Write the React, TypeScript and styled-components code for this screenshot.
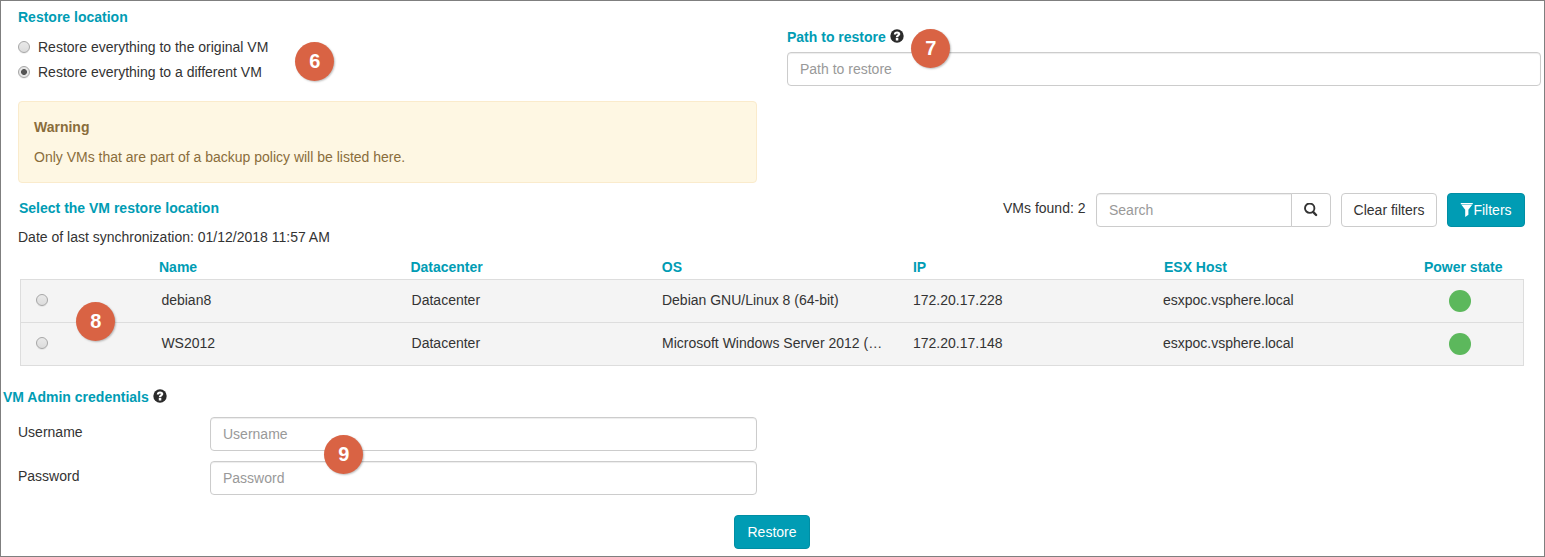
import React from 'react';
import styled, { createGlobalStyle } from 'styled-components';

const teal = '#009cb4';

const GlobalStyle = createGlobalStyle`
  *, *::before, *::after { box-sizing: border-box; }
  body {
    margin: 0;
    background: #fff;
    color: #333;
    font: 14px/20px "Liberation Sans", Arial, sans-serif;
  }
`;

const Page = styled.main`
  position: relative;
  display: flex;
  flex-direction: column;
  width: 1545px;
  height: 557px;
  border: 1px solid #7f7f7f;
  overflow: hidden;
`;

const TopRow = styled.div`
  display: flex;
  gap: 30px;
  padding: 6px 3px 0 17px;
`;

const LocationColumn = styled.section`
  width: 739px;
`;

const PathColumn = styled.section`
  flex: 1;
  padding-top: 20px;
`;

const Title = styled.h2`
  display: flex;
  gap: 4.6px;
  margin: 0;
  color: ${teal};
  font-size: 14px;
  line-height: 20px;
  font-weight: bold;
  white-space: nowrap;
`;

const Options = styled.div`
  display: flex;
  flex-direction: column;
  gap: 5px;
  margin-top: 10px;
`;

const Option = styled.label`
  display: flex;
  align-items: center;
  gap: 8px;
`;

const Radio = styled.input.attrs({ type: 'radio' })`
  appearance: none;
  flex: none;
  width: 12px;
  height: 12px;
  margin: 0;
  border: 1px solid #a6a6a6;
  border-radius: 50%;
  background: linear-gradient(#e9e9e9, #dcdcdc);
  box-shadow: 0 1px 0 rgba(0, 0, 0, 0.06);
  &:checked {
    background: radial-gradient(circle, #555 0 2.6px, #e6e6e6 3.3px);
  }
`;

const Alert = styled.div`
  margin-top: 19px;
  padding: 15px;
  border: 1px solid #faebcc;
  border-radius: 4px;
  background: #fef7e3;
  color: #8a6d3b;
  p { margin: 10px 0 0; }
`;

const Input = styled.input<{ $joined?: boolean }>`
  display: block;
  width: 100%;
  height: 34px;
  margin: 0;
  padding: 6px 12px;
  border: 1px solid #ccc;
  border-radius: ${(p) => (p.$joined ? '4px 0 0 4px' : '4px')};
  background: #fff;
  box-shadow: inset 0 1px 1px rgba(0, 0, 0, 0.075);
  color: #555;
  font: inherit;
  outline: none;
  &::placeholder { color: #999; opacity: 1; }
`;

const PathInput = styled(Input)`
  margin-top: 5px;
`;

const SelectHeader = styled.div`
  display: flex;
  justify-content: space-between;
  margin-top: 10px;
  padding: 0 19px 0 17px;
`;

const SelectTitles = styled.div`
  padding-top: 5px;
  ${Title} { padding-left: 1px; }
  p { margin: 9px 0 0; }
`;

const Toolbar = styled.div`
  display: flex;
  align-items: flex-start;
  gap: 10px;
`;

const FoundCount = styled.span`
  padding: 5px 0.5px 0 0;
`;

const SearchGroup = styled.div`
  display: flex;
  width: 235px;
`;

const Button = styled.button<{ $primary?: boolean; $width: number; $joined?: boolean }>`
  display: flex;
  align-items: center;
  justify-content: center;
  flex: none;
  width: ${(p) => p.$width}px;
  height: 34px;
  margin: 0 0 0 ${(p) => (p.$joined ? '-1px' : '0')};
  padding: 0;
  border: 1px solid ${(p) => (p.$primary ? '#008ea4' : '#ccc')};
  border-radius: ${(p) => (p.$joined ? '0 4px 4px 0' : '4px')};
  background: ${(p) => (p.$primary ? teal : '#fff')};
  color: ${(p) => (p.$primary ? '#fff' : '#333')};
  font: inherit;
  white-space: nowrap;
`;

const TableHead = styled.div`
  display: grid;
  grid-template-columns: 251.4px 251.4px 251.2px 251px 260px auto;
  margin-top: 10px;
  padding-left: 158px;
  color: ${teal};
  font-weight: bold;
`;

const TableBody = styled.div`
  width: 1504px;
  margin: 2px 0 0 19px;
  border: 1px solid #ddd;
  background: #f4f4f4;
`;

const Row = styled.div`
  display: grid;
  grid-template-columns: 125.4px 250.2px 250.4px 251px 250px 286px auto;
  align-items: center;
  height: 42px;
  padding-left: 15px;
  & + & {
    height: 43px;
    border-top: 1px solid #ddd;
  }
  ${Radio} { margin-bottom: 2px; }
`;

const Cell = styled.span`
  max-width: 222px;
  margin-bottom: 2px;
  overflow: hidden;
  text-overflow: ellipsis;
  white-space: nowrap;
`;

const PowerDot = styled.span`
  width: 22px;
  height: 22px;
  border-radius: 50%;
  background: #5cb85c;
`;

const Credentials = styled.section`
  padding: 21px 0 0 2px;
`;

const Field = styled.label`
  display: grid;
  grid-template-columns: 192px 547px;
  margin: 10px 0 0 15px;
  line-height: 30px;
`;

const Actions = styled.div`
  display: flex;
  justify-content: center;
  margin-top: 20px;
  padding-right: 1px;
`;

const Marker = styled.span<{ $x: number; $y: number }>`
  position: absolute;
  left: ${(p) => p.$x}px;
  top: ${(p) => p.$y}px;
  width: 39px;
  height: 39px;
  border-radius: 50%;
  background: #d96344;
  box-shadow: 1px 1px 2px rgba(0, 0, 0, 0.25);
  color: #fff;
  font-size: 20px;
  font-weight: bold;
  line-height: 38px;
  text-align: center;
`;

const Icon = styled.svg`
  display: block;
  flex: none;
`;

const TitleIcon = styled(Icon)`
  margin-top: 2px;
`;

const HelpIcon = () => (
  <TitleIcon width="14" height="14" viewBox="0 0 14 14">
    <circle cx="7" cy="7" r="6.7" fill="#2b2b2b" />
    <path
      d="M3.8 5.6C3.8 3.5 5.1 2.5 7.1 2.5s3.2 1 3.2 2.6c0 1.8-2 1.8-2 3.2H5.8c0-2.2 2-2.1 2-3.2 0-.4-.3-.6-.8-.6-.6 0-.9.4-.9 1.1zM5.8 9.1h2.5v2.3H5.8z"
      fill="#fff"
    />
  </TitleIcon>
);

const SearchIcon = () => (
  <Icon width="14" height="14" viewBox="0 0 14 14" fill="none" stroke="#333">
    <circle cx="5.7" cy="5.2" r="4.7" strokeWidth="1.9" />
    <path d="M9.1 8.9 12.1 12" strokeWidth="2.4" strokeLinecap="round" />
  </Icon>
);

const FilterIcon = () => (
  <Icon width="13" height="16" viewBox="0 0 13 16" fill="#fff">
    <path d="M.8 1h12v1.2H.8zM1.4 2.7h10.8L8.4 7.8v5L5.2 15V7.8z" />
  </Icon>
);

const vms = [
  { name: 'debian8', os: 'Debian GNU/Linux 8 (64-bit)', ip: '172.20.17.228' },
  { name: 'WS2012', os: 'Microsoft Windows Server 2012 (…', ip: '172.20.17.148' },
];

const markers = [
  { n: 6, x: 294.4, y: 41 },
  { n: 7, x: 910.4, y: 28 },
  { n: 8, x: 75.4, y: 301 },
  { n: 9, x: 323.4, y: 434 },
];

export default function App() {
  return (
    <Page>
      <GlobalStyle />
      <TopRow>
        <LocationColumn>
          <Title>Restore location</Title>
          <Options>
            <Option>
              <Radio name="location" />
              Restore everything to the original VM
            </Option>
            <Option>
              <Radio name="location" defaultChecked />
              Restore everything to a different VM
            </Option>
          </Options>
          <Alert>
            <strong>Warning</strong>
            <p>Only VMs that are part of a backup policy will be listed here.</p>
          </Alert>
        </LocationColumn>
        <PathColumn>
          <Title>
            Path to restore <HelpIcon />
          </Title>
          <PathInput placeholder="Path to restore" />
        </PathColumn>
      </TopRow>

      <SelectHeader>
        <SelectTitles>
          <Title>Select the VM restore location</Title>
          <p>Date of last synchronization: 01/12/2018 11:57 AM</p>
        </SelectTitles>
        <Toolbar>
          <FoundCount>VMs found: 2</FoundCount>
          <SearchGroup>
            <Input $joined placeholder="Search" />
            <Button $joined $width={40} aria-label="Search">
              <SearchIcon />
            </Button>
          </SearchGroup>
          <Button $width={96}>Clear filters</Button>
          <Button $primary $width={78}>
            <FilterIcon />
            Filters
          </Button>
        </Toolbar>
      </SelectHeader>

      <TableHead>
        <span>Name</span>
        <span>Datacenter</span>
        <span>OS</span>
        <span>IP</span>
        <span>ESX Host</span>
        <span>Power state</span>
      </TableHead>
      <TableBody>
        {vms.map((vm) => (
          <Row key={vm.name}>
            <Radio name="vm" />
            <Cell>{vm.name}</Cell>
            <Cell>Datacenter</Cell>
            <Cell>{vm.os}</Cell>
            <Cell>{vm.ip}</Cell>
            <Cell>esxpoc.vsphere.local</Cell>
            <PowerDot />
          </Row>
        ))}
      </TableBody>

      <Credentials>
        <Title>
          VM Admin credentials <HelpIcon />
        </Title>
        <Field>
          Username
          <Input placeholder="Username" />
        </Field>
        <Field>
          Password
          <Input type="password" placeholder="Password" />
        </Field>
      </Credentials>

      <Actions>
        <Button $primary $width={76}>Restore</Button>
      </Actions>

      {markers.map((m) => (
        <Marker key={m.n} $x={m.x} $y={m.y}>
          {m.n}
        </Marker>
      ))}
    </Page>
  );
}
